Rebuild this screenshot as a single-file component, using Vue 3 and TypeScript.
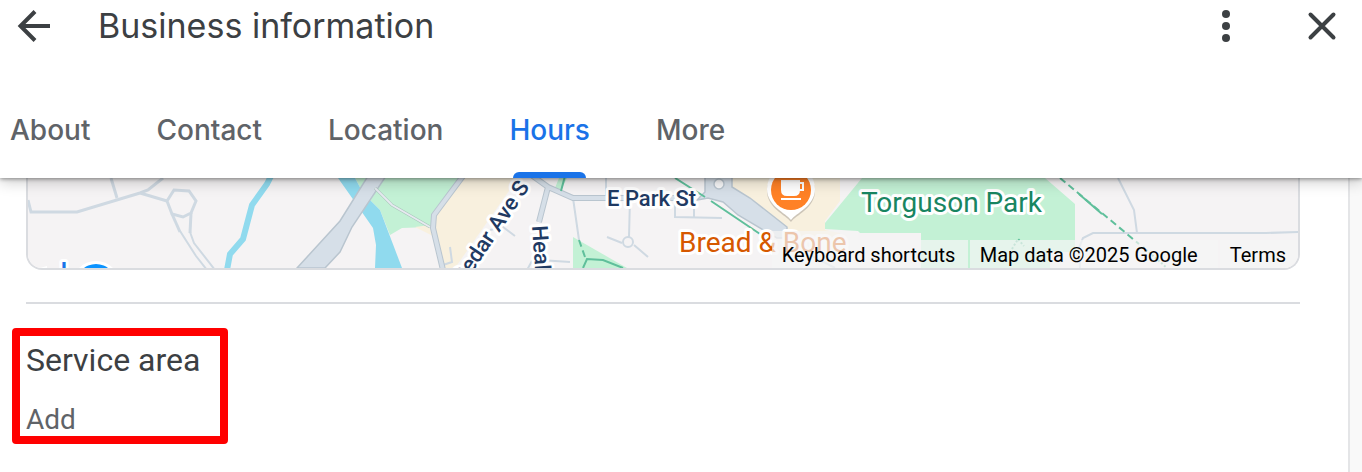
<script setup lang="ts">
import { ref } from 'vue'

const tabs: string[] = ['About', 'Contact', 'Location', 'Hours', 'More']
const activeTab = ref<string>('Hours')
</script>

<template>
  <div class="page">
    <header class="header">
      <div class="title-bar">
        <button class="icon-button" type="button" aria-label="Back">
          <svg viewBox="0 0 36 36" width="36" height="36">
            <path d="M34 18H5M19 3.5L4.500 18L19 32.500" fill="none" stroke="currentColor" stroke-width="4" />
          </svg>
        </button>
        <h1 class="title">Business information</h1>
        <button class="icon-button more" type="button" aria-label="More options">
          <svg viewBox="0 0 36 36" width="36" height="36" fill="currentColor">
            <circle cx="18" cy="6" r="4" />
            <circle cx="18" cy="18" r="4" />
            <circle cx="18" cy="30" r="4" />
          </svg>
        </button>
        <button class="icon-button" type="button" aria-label="Close">
          <svg viewBox="0 0 36 36" width="36" height="36">
            <path d="M6.500 6.500L29.500 29.500M29.500 6.500L6.500 29.500" stroke="currentColor" stroke-width="4" stroke-linecap="round" />
          </svg>
        </button>
      </div>
      <nav class="tabs" aria-label="Sections">
        <button
          v-for="tab in tabs"
          :key="tab"
          type="button"
          class="tab"
          :class="{ active: tab === activeTab }"
          @click="activeTab = tab"
        >
          {{ tab }}
        </button>
      </nav>
    </header>

    <div class="body">
      <main class="content">
        <section class="map" aria-label="Map">
          <svg class="map-canvas" viewBox="28 178 1270 90" preserveAspectRatio="xMinYMin slice">
            <rect x="28" y="178" width="1270" height="90" fill="#f5f3f4" />

            <g class="green">
              <path d="M355 178H460L435 215L430 227L402 228L390 235L380 210L363 193Z" />
              <path d="M559 178H567L560 192L555 188Z" />
              <path d="M573 237L627 268H573Z" />
              <path d="M862 178H1045L1075 204V252H1050V268H921V233H860L858 231L825 229V223Z" />
            </g>
            <g class="sand">
              <path d="M462 178H518L455 268H443L432 227L434 215Z" />
              <path d="M415 227L430 225L433 236Z" />
              <path d="M732 178H840V201L825 221V230L840 233V240H787V227L750 198L732 187Z" />
            </g>
            <path d="M338 178H355L363 193L380 210L402 268H375L376 245L373 228L350 195Z" fill="#90daee" />
            <path d="M271 176L267 184L252 205L243 239L230 254L227 270" fill="none" stroke="#90daee" stroke-width="6" />

            <path d="M368 176L350 205L340 221L297 268H325L340 252L352 227L386 176Z" fill="#d6dfe8" stroke="#b9c5cf" stroke-width="1.500" />

            <g class="road">
              <path d="M28 200L31 212H77L140 193L148 190L163 178M111 178L117 198M140 193L167 201" />
              <path d="M167 201L174 190L189 191L196 201L191 213L183 217L172 214Z" />
              <path d="M172 214L180 232" />
              <path d="M191 213L190 233" />
            </g>
            <g class="lane">
              <path d="M180 231L196 256L207 270M190 232L194 243L215 270" />
              <path d="M450 247L452 262L443 265M490 230L503 227L515 236M540 260L570 262M527 270L532 261" />
              <path d="M606 178V197M630 198L629 237M607 237L622 243M634 245L648 257M573 198L579 240" />
              <circle cx="628" cy="242" r="5" />
              <path d="M675 202V217L722 218M694 205V218" />
              <path d="M1118 178L1134 210L1137 233M1298 232L1266 233H1093L1083 238L1079 248L1080 268" />
              <path d="M787 240L812 256L835 268" />
            </g>
            <path d="M375 188L392 205L430 227" fill="none" stroke="#a9c4bb" stroke-width="3" />
            <path d="M375 188L392 205L430 227" fill="none" stroke="#e6eaf0" stroke-width="2" />

            <g class="avenue-edge">
              <path d="M463 176L434 215L433 228L443 270" />
              <path d="M530 174L548 187L573 198H675M548 187L539 222" />
            </g>
            <g class="avenue">
              <path d="M463 176L434 215L433 228L443 270" />
              <path d="M530 174L548 187L573 198H675M548 187L539 222" />
            </g>

            <path
              d="M705 176V192L697 200L708 198L723 202L738 215L777 238H787V227L750 198L732 187V176Z"
              fill="#d6dfe8"
              stroke="#b9c5cf"
              stroke-width="1.500"
            />
            <circle cx="719" cy="184" r="5" fill="#f8f8f9" stroke="#b9c5cf" stroke-width="1.500" />

            <g class="trail">
              <path d="M565 176L561 191M675 178L705 197M711 201L760 234" />
              <path d="M583 268L587 259L603 260L623 268" />
              <path d="M579 240L585 257M1060 178L1139 244" stroke-dasharray="7 4" />
              <path d="M1079 194L1102 214" />
            </g>
            <path class="trail faint" d="M1143 247L1167 268M1012 249L1018 239L1024 246" />

            <g class="street">
              <text transform="translate(530 187) rotate(-56)" text-anchor="end">Cedar Ave S</text>
              <text transform="translate(532 226) rotate(86)">Healy</text>
              <text x="607" y="206">E Park St</text>
            </g>
            <text class="park" x="861" y="212">Torguson Park</text>

            <path d="M791 220C786 213 767 206 767 189A24 24 0 0 1 815 189C815 206 796 213 791 220Z" fill="#8b8580" opacity="0.4" transform="translate(0 2)" />
            <path d="M791 220C786 213 767 206 767 189A24 24 0 0 1 815 189C815 206 796 213 791 220Z" fill="#fff" />
            <circle cx="791" cy="190" r="20" fill="#ff8126" />
            <path d="M781 180H800V190Q800 196 794 196H787Q781 196 781 190ZM781 198H801V200H781Z" fill="#fff" />
            <path d="M799 183H803V190H799" fill="none" stroke="#fff" stroke-width="2" />

            <text class="cafe" x="679" y="252">Bread &amp; Bone</text>
            <rect x="770" y="231" width="88" height="9" fill="#f5f3f4" opacity="0.7" />

            <text class="transit" x="61" y="279">l</text>
            <path d="M40 268L47 266V268Z" fill="#fff" />
            <circle cx="96" cy="285" r="24" fill="#fff" />
            <circle cx="96" cy="284" r="20" fill="#0b93ff" />
          </svg>
          <div class="attribution">
            <button type="button" class="credit shortcuts">Keyboard shortcuts</button>
            <span class="credit source">Map data ©2025 Google</span>
            <a class="credit" href="#">Terms</a>
          </div>
        </section>

        <hr class="divider" />

        <section class="service-area">
          <h2 class="service-title">Service area</h2>
          <button type="button" class="add">Add</button>
        </section>
      </main>
      <aside class="rail"></aside>
    </div>
  </div>
</template>

<style>
body {
  margin: 0;
  background: #fff;
}
</style>

<style scoped>
.page {
  display: flex;
  flex-direction: column;
  min-height: 100vh;
  font-family: Roboto, 'Liberation Sans', sans-serif;
  color: #3c4043;
}

button {
  padding: 0;
  border: 0;
  background: none;
  font: inherit;
  color: inherit;
  cursor: pointer;
}

.header {
  position: relative;
  z-index: 1;
  background: #fff;
  box-shadow: 0 1px 4px rgba(0, 0, 0, 0.4), 0 4px 14px rgba(0, 0, 0, 0.2);
}

.title-bar {
  display: flex;
  align-items: center;
  height: 52px;
  padding: 0 22px 0 16px;
}

.icon-button {
  display: flex;
}

.more {
  margin-right: 60px;
}

.title {
  flex: 1;
  margin: 0 0 0 46px;
  font-family: Inter, Roboto, sans-serif;
  font-size: 34px;
  font-weight: 400;
  line-height: 52px;
}

.tabs {
  display: flex;
  gap: 66px;
  height: 126px;
  padding-left: 10px;
}

.tab {
  position: relative;
  padding-top: 30px;
  font-family: Inter, Roboto, sans-serif;
  font-size: 28px;
  font-weight: 500;
  line-height: 36px;
  color: #5f6368;
}

.tab.active {
  color: #1a73e8;
}

.tab.active::after {
  content: '';
  position: absolute;
  right: 4px;
  bottom: 0;
  left: 4px;
  height: 6px;
  border-radius: 6px 6px 0 0;
  background: #1a73e8;
}

.body {
  display: flex;
  flex: 1;
}

.content {
  flex: 1;
}

.map {
  position: relative;
  height: 90px;
  margin: 0 48px 0 26px;
  overflow: hidden;
  border: solid #dadce0;
  border-width: 0 2px 2px;
  border-radius: 0 0 16px 16px;
}

.map-canvas {
  display: block;
  width: 100%;
  height: 100%;
}

.green {
  fill: #c3f1d5;
}

.sand {
  fill: #f8f0de;
}

.road,
.lane,
.avenue,
.avenue-edge,
.trail {
  fill: none;
}

.road {
  stroke: #cfd9e2;
  stroke-width: 3;
}

.lane {
  stroke: #cfd9e2;
  stroke-width: 2;
}

.avenue-edge {
  stroke: #b9c5cf;
  stroke-width: 6;
}

.avenue {
  stroke: #d6dfe8;
  stroke-width: 4;
}

.trail {
  stroke: #5fbf9b;
  stroke-width: 2;
}

.faint {
  stroke-dasharray: 2 2;
}

.map-canvas text {
  font-family: Roboto, sans-serif;
  stroke: #fff;
  stroke-width: 6;
  stroke-linejoin: round;
  paint-order: stroke;
}

.street {
  font-size: 22px;
  font-weight: 500;
  fill: #1f3a63;
}

.park {
  font-size: 28px;
  fill: #188561;
}

.cafe {
  font-size: 28px;
  fill: #d65800;
}

.transit {
  font-size: 22px;
  font-weight: 700;
  fill: #1a73e8;
}

.attribution {
  position: absolute;
  right: 0;
  bottom: 0;
  display: flex;
  gap: 2px;
}

.credit {
  box-sizing: border-box;
  padding: 2px 12px 0 10px;
  background: rgba(245, 245, 245, 0.7);
  font-size: 20px;
  line-height: 26px;
  text-align: left;
  color: #000;
  text-decoration: none;
}

.shortcuts {
  min-width: 196px;
}

.source {
  min-width: 248px;
}

.divider {
  height: 2px;
  margin: 32px 48px 0 26px;
  border: 0;
  background: #dadce0;
}

.service-area {
  display: flex;
  flex-direction: column;
  align-items: flex-start;
  box-sizing: border-box;
  width: 216px;
  height: 116px;
  margin: 24px 0 0 12px;
  padding-left: 6px;
  border: 8px solid #f00;
  border-radius: 4px;
}

.service-title {
  margin: 4px 0 0;
  font-size: 32px;
  font-weight: 400;
  line-height: 40px;
}

.add {
  margin-top: 20px;
  font-size: 28px;
  line-height: 40px;
  color: #5f6368;
}

.rail {
  box-sizing: border-box;
  width: 14px;
  border-left: 2px solid #e4e5e7;
  background: #f9f9f9;
}
</style>
